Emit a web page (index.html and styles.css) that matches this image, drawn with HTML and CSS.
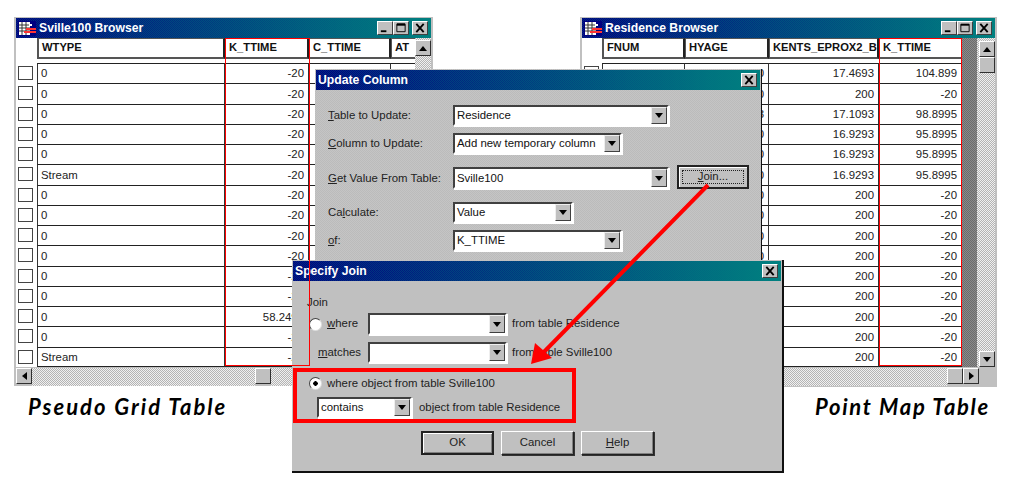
FILE: index.html
```html
<!DOCTYPE html>
<html lang="en">
<head>
<meta charset="utf-8">
<title>Update Column and Specify Join</title>
<link rel="stylesheet" href="styles.css">
</head>
<body>
<main class="desktop">

  <section class="window window-left">
    <header class="titlebar">
      <svg class="app-icon" viewBox="0 0 18 15" aria-hidden="true"><rect width="18" height="15" fill="#000080"/><rect x="1" y="1" width="11" height="13" fill="#fff"/><path d="M1 4h11M1 7h11M1 10h11M4 1v13M8 1v13" stroke="#333" fill="none"/><rect x="8" y="7" width="10" height="2" fill="#f33"/><rect x="6" y="10" width="12" height="2" fill="#f33"/><rect x="11" y="3" width="3" height="2" fill="#fff"/></svg>
      <span class="title-text">Sville100 Browser</span>
      <div class="title-buttons">
        <button class="tbtn"><svg viewBox="0 0 15 13"><rect x="3" y="9" width="6" height="2"/></svg></button>
        <button class="tbtn"><svg viewBox="0 0 15 13"><path d="M3 2.5h9v8H3zM3 2h9" fill="none" stroke="#000"/><rect x="3" y="2" width="9" height="2"/></svg></button>
        <button class="tbtn tbtn-close"><svg viewBox="0 0 15 13"><path d="M3.5 2l8 9M11.5 2l-8 9" stroke="#000" stroke-width="2" fill="none"/></svg></button>
      </div>
    </header>
    <div class="browser-body">
      <div class="table-area">
        <div class="hrow">
          <span></span><b class="hcell">WTYPE</b><b class="hcell">K_TTIME</b><b class="hcell">C_TTIME</b><b class="hcell hcell-cut">AT</b>
        </div>
        <div class="rows">
          <div class="row"><i class="check"></i><span class="cell">0</span><span class="cell num">-20</span><span class="cell"></span><span class="cell"></span></div>
          <div class="row"><i class="check"></i><span class="cell">0</span><span class="cell num">-20</span><span class="cell"></span><span class="cell"></span></div>
          <div class="row"><i class="check"></i><span class="cell">0</span><span class="cell num">-20</span><span class="cell"></span><span class="cell"></span></div>
          <div class="row"><i class="check"></i><span class="cell">0</span><span class="cell num">-20</span><span class="cell"></span><span class="cell"></span></div>
          <div class="row"><i class="check"></i><span class="cell">0</span><span class="cell num">-20</span><span class="cell"></span><span class="cell"></span></div>
          <div class="row"><i class="check"></i><span class="cell">Stream</span><span class="cell num">-20</span><span class="cell"></span><span class="cell"></span></div>
          <div class="row"><i class="check"></i><span class="cell">0</span><span class="cell num">-20</span><span class="cell"></span><span class="cell"></span></div>
          <div class="row"><i class="check"></i><span class="cell">0</span><span class="cell num">-20</span><span class="cell"></span><span class="cell"></span></div>
          <div class="row"><i class="check"></i><span class="cell">0</span><span class="cell num">-20</span><span class="cell"></span><span class="cell"></span></div>
          <div class="row"><i class="check"></i><span class="cell">0</span><span class="cell num">-20</span><span class="cell"></span><span class="cell"></span></div>
          <div class="row"><i class="check"></i><span class="cell">0</span><span class="cell num">-20</span><span class="cell"></span><span class="cell"></span></div>
          <div class="row"><i class="check"></i><span class="cell">0</span><span class="cell num">-20</span><span class="cell"></span><span class="cell"></span></div>
          <div class="row"><i class="check"></i><span class="cell">0</span><span class="cell num">58.2495</span><span class="cell"></span><span class="cell"></span></div>
          <div class="row"><i class="check"></i><span class="cell">0</span><span class="cell num">-20</span><span class="cell"></span><span class="cell"></span></div>
          <div class="row"><i class="check"></i><span class="cell">Stream</span><span class="cell num">-20</span><span class="cell"></span><span class="cell"></span></div>
        </div>
        <div class="red-column"></div>
      </div>
      <div class="vscroll">
        <button class="sbtn"><i class="arrow arrow-up"></i></button>
        <div class="vtrack"></div>
      </div>
    </div>
    <div class="hscroll">
      <button class="sbtn"><i class="arrow arrow-left"></i></button>
      <div class="htrack htrack-left"></div>
      <button class="sbtn sbtn-thumb"></button>
      <div class="htrack"></div>
    </div>
  </section>

  <section class="window window-right">
    <header class="titlebar">
      <svg class="app-icon" viewBox="0 0 18 15" aria-hidden="true"><rect width="18" height="15" fill="#000080"/><rect x="1" y="1" width="11" height="13" fill="#fff"/><path d="M1 4h11M1 7h11M1 10h11M4 1v13M8 1v13" stroke="#333" fill="none"/><rect x="8" y="7" width="10" height="2" fill="#f33"/><rect x="6" y="10" width="12" height="2" fill="#f33"/><rect x="11" y="3" width="3" height="2" fill="#fff"/></svg>
      <span class="title-text">Residence Browser</span>
      <div class="title-buttons">
        <button class="tbtn"><svg viewBox="0 0 15 13"><rect x="3" y="9" width="6" height="2"/></svg></button>
        <button class="tbtn"><svg viewBox="0 0 15 13"><path d="M3 2.5h9v8H3z" fill="none" stroke="#000"/><rect x="3" y="2" width="9" height="2"/></svg></button>
        <button class="tbtn tbtn-close"><svg viewBox="0 0 15 13"><path d="M3.5 2l8 9M11.5 2l-8 9" stroke="#000" stroke-width="2" fill="none"/></svg></button>
      </div>
    </header>
    <div class="browser-body">
      <div class="table-area table-area-right">
        <div class="hrow">
          <span></span><b class="hcell">FNUM</b><b class="hcell">HYAGE</b><b class="hcell">KENTS_EPROX2_BI</b><b class="hcell">K_TTIME</b>
        </div>
        <div class="rows">
          <div class="row"><i class="check"></i><span class="cell"></span><span class="cell num">30</span><span class="cell num">17.4693</span><span class="cell num">104.899</span></div>
          <div class="row"><i class="check"></i><span class="cell"></span><span class="cell num">30</span><span class="cell num">200</span><span class="cell num">-20</span></div>
          <div class="row"><i class="check"></i><span class="cell"></span><span class="cell num">33</span><span class="cell num">17.1093</span><span class="cell num">98.8995</span></div>
          <div class="row"><i class="check"></i><span class="cell"></span><span class="cell num">30</span><span class="cell num">16.9293</span><span class="cell num">95.8995</span></div>
          <div class="row"><i class="check"></i><span class="cell"></span><span class="cell num">30</span><span class="cell num">16.9293</span><span class="cell num">95.8995</span></div>
          <div class="row"><i class="check"></i><span class="cell"></span><span class="cell num">30</span><span class="cell num">16.9293</span><span class="cell num">95.8995</span></div>
          <div class="row"><i class="check"></i><span class="cell"></span><span class="cell num">30</span><span class="cell num">200</span><span class="cell num">-20</span></div>
          <div class="row"><i class="check"></i><span class="cell"></span><span class="cell num">30</span><span class="cell num">200</span><span class="cell num">-20</span></div>
          <div class="row"><i class="check"></i><span class="cell"></span><span class="cell num">30</span><span class="cell num">200</span><span class="cell num">-20</span></div>
          <div class="row"><i class="check"></i><span class="cell"></span><span class="cell num">30</span><span class="cell num">200</span><span class="cell num">-20</span></div>
          <div class="row"><i class="check"></i><span class="cell"></span><span class="cell"></span><span class="cell num">200</span><span class="cell num">-20</span></div>
          <div class="row"><i class="check"></i><span class="cell"></span><span class="cell"></span><span class="cell num">200</span><span class="cell num">-20</span></div>
          <div class="row"><i class="check"></i><span class="cell"></span><span class="cell"></span><span class="cell num">200</span><span class="cell num">-20</span></div>
          <div class="row"><i class="check"></i><span class="cell"></span><span class="cell"></span><span class="cell num">200</span><span class="cell num">-20</span></div>
          <div class="row"><i class="check"></i><span class="cell"></span><span class="cell"></span><span class="cell num">200</span><span class="cell num">-20</span></div>
        </div>
        <div class="red-column"></div>
      </div>
      <div class="dark-gap"></div>
      <div class="vscroll vscroll-right">
        <button class="sbtn"><i class="arrow arrow-up"></i></button>
        <button class="sbtn sbtn-thumb"></button>
        <div class="vtrack"></div>
        <button class="sbtn"><i class="arrow arrow-down"></i></button>
      </div>
    </div>
    <div class="hscroll">
      <div class="htrack"></div>
      <button class="sbtn sbtn-thumb"></button>
      <button class="sbtn"><i class="arrow arrow-right"></i></button>
      <div class="corner"></div>
    </div>
  </section>

  <section class="dialog dialog-update">
    <header class="titlebar titlebar-dialog">
      <span class="title-text">Update Column</span>
      <div class="title-buttons">
        <button class="tbtn tbtn-close"><svg viewBox="0 0 15 13"><path d="M3.5 2l8 9M11.5 2l-8 9" stroke="#000" stroke-width="2" fill="none"/></svg></button>
      </div>
    </header>
    <div class="form">
      <div class="form-row"><label><u>T</u>able to Update:</label><div class="combo combo-wide"><span class="combo-text">Residence</span><button class="combo-btn"><i class="arrow arrow-down"></i></button></div></div>
      <div class="form-row gap-s"><label><u>C</u>olumn to Update:</label><div class="combo combo-mid"><span class="combo-text">Add new temporary column</span><button class="combo-btn"><i class="arrow arrow-down"></i></button></div></div>
      <div class="form-row form-row-join gap-l"><label><u>G</u>et Value From Table:</label><div class="combo combo-wide combo-tall"><span class="combo-text">Sville100</span><button class="combo-btn"><i class="arrow arrow-down"></i></button></div><button class="btn btn-join"><span class="focus"><u>J</u>oin...</span></button></div>
      <div class="form-row gap-l"><label>Ca<u>l</u>culate:</label><div class="combo combo-short"><span class="combo-text">Value</span><button class="combo-btn"><i class="arrow arrow-down"></i></button></div></div>
      <div class="form-row gap-s"><label><u>o</u>f:</label><div class="combo combo-mid"><span class="combo-text">K_TTIME</span><button class="combo-btn"><i class="arrow arrow-down"></i></button></div></div>
    </div>
  </section>

  <section class="dialog dialog-join">
    <header class="titlebar titlebar-dialog">
      <span class="title-text">Specify Join</span>
      <div class="title-buttons">
        <button class="tbtn tbtn-close"><svg viewBox="0 0 15 13"><path d="M3.5 2l8 9M11.5 2l-8 9" stroke="#000" stroke-width="2" fill="none"/></svg></button>
      </div>
    </header>
    <div class="join-form">
      <div class="join-title">Join</div>
      <div class="join-row">
        <i class="radio"></i><span class="join-label"><u>w</u>here</span>
        <div class="combo combo-join combo-tall"><span class="combo-text"></span><button class="combo-btn"><i class="arrow arrow-down"></i></button></div>
        <span class="after">from table Residence</span>
      </div>
      <div class="join-row join-row-second">
        <span class="join-label-wide"><u>m</u>atches</span>
        <div class="combo combo-join"><span class="combo-text"></span><button class="combo-btn"><i class="arrow arrow-down"></i></button></div>
        <span class="after">from table Sville100</span>
      </div>
      <div class="red-box">
        <div class="red-line"><i class="radio radio-on"></i><span>where object from table Sville100</span></div>
        <div class="red-line red-line-combo">
          <div class="combo combo-contains"><span class="combo-text">contains</span><button class="combo-btn"><i class="arrow arrow-down"></i></button></div>
          <span>object from table Residence</span>
        </div>
      </div>
      <div class="actions">
        <button class="btn btn-ok">OK</button>
        <button class="btn">Cancel</button>
        <button class="btn"><u>H</u>elp</button>
      </div>
    </div>
  </section>

  <svg class="pointer" viewBox="0 0 1013 482" aria-hidden="true">
    <path d="M708 185L537 359" stroke="#f00" stroke-width="4" fill="none"/>
    <path d="M531 364L535 343L552 358Z" fill="#f00"/>
  </svg>

  <p class="caption caption-left">Pseudo Grid Table</p>
  <p class="caption caption-right">Point Map Table</p>
</main>
</body>
</html>
```
FILE: styles.css
```css
* { box-sizing: border-box; }
html, body { margin: 0; padding: 0; background: #fff; }
body { font: 11.4px/1 "Liberation Sans", Arial, sans-serif; color: #222; }
u { text-underline-offset: 1px; }
button { font: inherit; color: inherit; padding: 0; margin: 0; }

.desktop { position: relative; width: 1013px; height: 482px; overflow: hidden; background: #fff; }

/* Browser windows */
.window { position: absolute; display: flex; flex-direction: column; background: #c0c0c0; padding: 1px 2px; }
.window-left { left: 14px; top: 17px; width: 419px; height: 369px; padding-bottom: 0; }
.window-right { left: 580px; top: 17px; width: 417px; height: 370px; }

.titlebar {
  flex: none; height: 20px; display: flex; align-items: center; gap: 3px; padding: 0 2px;
  color: #fff;
  background:
    conic-gradient(rgba(0, 128, 128, .3) 25%, transparent 0 50%, rgba(0, 128, 128, .3) 0 75%, transparent 0) 0 0 / 2px 2px,
    linear-gradient(90deg, #000080 0%, #00257f 30%, #00807f 100%);
}
.app-icon { width: 18px; height: 15px; flex: none; }
.title-text { font-weight: 700; font-size: 12.2px; }
.title-buttons { margin-left: auto; display: flex; gap: 0; margin-right: 1px; }
.tbtn {
  width: 16px; height: 14px; display: block; background: #c0c0c0;
  border: 1px solid; border-color: #fff #404040 #404040 #fff;
}
.tbtn svg { display: block; width: 14px; height: 12px; }
.tbtn-close { margin-left: 3px; }

.browser-body { flex: 1; min-height: 0; display: flex; }
.table-area { position: relative; width: 399px; background: #fff; flex: none; }
.table-area-right { width: 380px; }

.hrow, .row { display: grid; grid-template-columns: 21px 188px 84px 82px 24px; }
.table-area-right .hrow, .table-area-right .row { grid-template-columns: 20px 83px 84px 110px 83px; }
.hrow { height: 21px; }
.hcell {
  display: flex; align-items: center; padding-left: 3px; font-size: 11.2px; color: #111;
  border: 1px solid #555; border-right: 2px solid #222; border-bottom-width: 2px; overflow: hidden; white-space: nowrap;
}
.hrow > .hcell:first-of-type { border-left-width: 2px; }
.hcell-cut { padding-left: 3px; border-right: 0; }
.rows { margin-top: 4px; }
.row { height: 20.27px; }
.check { width: 15px; height: 14px; margin: 3px 0 0 2px; border: 1px solid #444; background: #fff; display: block; }
.cell {
  display: flex; align-items: center; padding: 1px 3px 0; border-top: 1px solid #222; border-right: 1px solid #333;
  white-space: nowrap; overflow: hidden;
}
.check + .cell { border-left: 1px solid #333; }
.num { justify-content: flex-end; padding-right: 4px; }
.hrow > :last-child, .row > :last-child { border-right: 0; }
.table-area-right .row > :last-child { border-right: 1px solid #333; }
.rows .row:last-child .cell { border-bottom: 1px solid #222; }

.red-column { position: absolute; z-index: 1; left: 209px; top: 0; width: 85px; height: 328px; border: 1px solid #f00; pointer-events: none; }
.table-area-right .red-column { left: 297px; width: 83px; }

.vscroll {
  flex: 1; display: flex; flex-direction: column; align-items: flex-end; padding: 2px 0 0;
  background: conic-gradient(#f0f0f0 25%, #b4b4b4 0 50%, #f0f0f0 0 75%, #b4b4b4 0) 0 0 / 2px 2px;
}
.vscroll-right { flex: none; width: 18px; padding-top: 3px; }
.vtrack { flex: 1; }
.dark-gap { width: 15px; background: conic-gradient(#8a8a8a 25%, #6c6c6c 0 50%, #8a8a8a 0 75%, #6c6c6c 0) 0 0 / 2px 2px; }
.sbtn {
  width: 16px; height: 16px; flex: none; display: flex; align-items: center; justify-content: center; background: #c0c0c0;
  border: 1px solid; border-color: #fff #303030 #303030 #fff;
}
.sbtn-thumb { background: #c0c0c0; }
.hscroll { flex: none; height: 18px; display: flex; margin-top: 1px; }
.htrack { flex: 1; background: conic-gradient(#f0f0f0 25%, #b4b4b4 0 50%, #f0f0f0 0 75%, #b4b4b4 0) 0 0 / 2px 2px; }
.htrack-left { flex: none; width: 223px; }
.corner { width: 16px; background: #c0c0c0; }

.arrow { display: block; width: 0; height: 0; border-style: solid; border-color: transparent; }
.arrow-up { border-width: 0 4px 5px; border-bottom-color: #000; }
.arrow-down { border-width: 5px 4px 0; border-top-color: #000; }
.arrow-left { border-width: 4px 5px 4px 0; border-right-color: #000; }
.arrow-right { border-width: 4px 0 4px 5px; border-left-color: #000; }

/* Dialogs */
.dialog { position: absolute; background: #c0c0c0; display: flex; flex-direction: column; padding: 1px; border-right: 1px solid #111; border-bottom: 1px solid #111; }
.dialog-update {
  left: 315px; top: 69px; width: 447px; height: 200px;
  background: conic-gradient(#c5c5c5 25%, #bbb 0 50%, #c5c5c5 0 75%, #bbb 0) 0 0 / 2px 2px;
}
.dialog-join { left: 292px; top: 260px; width: 492px; height: 213px; border-right-width: 2px; border-bottom-width: 2px; }
.titlebar-dialog { padding-left: 2px; height: 20px; }

.form { display: flex; flex-direction: column; padding: 15px 0 0 12px; }
.form-row { display: flex; align-items: center; }
.form-row label { width: 125px; flex: none; }
.form-row-join { align-items: flex-end; }
.form-row-join label { align-self: center; padding-top: 1px; }
.gap-s { margin-top: 7px; }
.gap-l { margin-top: 13px; }

.combo {
  display: flex; align-items: stretch; height: 21px; background: #fff; flex: none;
  border: 2px solid; border-color: #404040 #fff #fff #404040; box-shadow: 1px 1px 0 #fff;
}
.combo-tall { height: 22px; }
.combo-wide { width: 216px; }
.combo-mid { width: 169px; }
.combo-short { width: 120px; }
.combo-join { width: 139px; }
.combo-contains { width: 95px; }
.combo-text { flex: 1; display: flex; align-items: center; padding: 1px 0 0 2px; white-space: nowrap; overflow: hidden; color: #111; }
.combo-btn {
  width: 16px; flex: none; display: flex; align-items: center; justify-content: center; background: #c0c0c0;
  border: 1px solid; border-color: #eee #404040 #404040 #eee;
}

.btn {
  width: 73px; height: 24px; background: #c0c0c0; display: flex; align-items: center; justify-content: center;
  border: 1px solid; border-color: #fff #222 #222 #fff; box-shadow: inset -1px -1px 0 #808080, 1px 1px 0 #333;
}
.btn-join { width: 72px; margin: -2px 0 0 8px; border: 2px solid #222; box-shadow: inset 1px 1px 0 #fff; }
.focus { display: flex; align-items: center; justify-content: center; width: 62px; height: 14px; border: 1px dotted #222; }
.btn-ok { border: 2px solid #222; box-shadow: inset 1px 1px 0 #fff, inset -1px -1px 0 #808080; }

.join-form { display: flex; flex-direction: column; }
.join-title { padding: 16px 0 0 14px; height: 31px; }
.join-row { display: flex; align-items: center; padding-left: 16px; height: 22px; margin-top: 1px; }
.join-row-second { margin-top: 7px; height: 21px; }
.join-label { width: 46px; padding-left: 5px; flex: none; }
.join-label-wide { width: 59px; padding-left: 9px; flex: none; }
.after { margin-left: 5px; }
.radio {
  width: 13px; height: 13px; flex: none; border-radius: 50%; background: #fff; display: block;
  border: 1px solid; border-color: #444 #ddd #ddd #444;
}
.radio-on { background: radial-gradient(circle, #000 2px, #fff 2.5px); }
.red-box {
  width: 283px; height: 55px; margin-top: 5px; border: 4px solid #f00; padding: 5px 0 0 12px;
  display: flex; flex-direction: column;
}
.red-line { display: flex; align-items: center; gap: 5px; }
.red-line-combo { margin: 7px 0 0 8px; gap: 7px; }
.actions { display: flex; gap: 7px; margin: 8px 0 0 128px; }

.pointer { position: absolute; left: 0; top: 0; width: 1013px; height: 482px; pointer-events: none; }

.caption {
  position: absolute; margin: 0; color: #000; white-space: nowrap;
  font: italic 700 22px/1 "Lato", "DejaVu Sans", sans-serif;
}
.caption-left { left: 28px; top: 396px; letter-spacing: 2px; }
.caption-right { left: 815px; top: 396px; letter-spacing: 1.7px; }
```
